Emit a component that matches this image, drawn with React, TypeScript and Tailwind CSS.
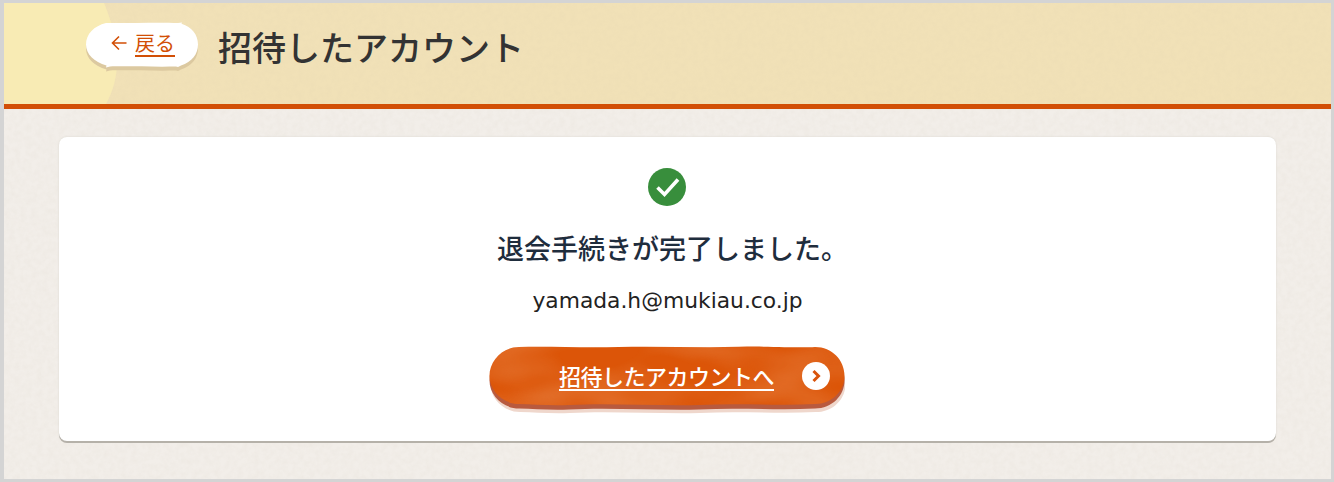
import React from 'react';

const jp = 'font-["Noto_Sans_CJK_JP","Noto_Sans",sans-serif]';

const buttonShape =
  'M30 1C60 0 90 2 130 1C170 0 210 2 250 .8C280 0 310 2 326 1C343 1 355.5 14 355.5 30C355.5 45 343 58 326 58C290 60 250 57 210 59C170 60 120 57 80 59C60 60 45 58 30 58C14 58 .5 45 .5 30C.5 14 14 1 30 1Z';
const backShape =
  'M20 1C40 1.5 70 0 92 1L96 .5L95.5 1.8C106 5 112 13 112 22.5C112 32 106 40 95 43.5L92 45L90 44.5C70 45 40 44 24 44.5L20 45.5L20.5 43.5C8 40 0 32 0 22.5C0 12 8 4 20 1Z';

function Paper({ id, opacity }: { id: string; opacity: number }) {
  return (
    <svg className="pointer-events-none absolute inset-0 h-full w-full" style={{ opacity }}>
      <filter id={id}>
        <feTurbulence type="fractalNoise" baseFrequency="0.18" numOctaves="3" seed="4" />
        <feColorMatrix values="0 0 0 0 0.55  0 0 0 0 0.48  0 0 0 0 0.38  0.9 0 0 0 -0.28" />
      </filter>
      <rect width="100%" height="100%" filter={`url(#${id})`} />
    </svg>
  );
}

function CheckBadge() {
  return (
    <svg className="mr-[1px]" width="38" height="38" viewBox="0 0 38 38">
      <circle cx="19" cy="19" r="19" fill="#388e3c" />
      <path d="M9.5 19.5l7 7L30 11.5" fill="none" stroke="#fff" strokeWidth="3.6" />
    </svg>
  );
}

function ChevronBadge() {
  return (
    <svg className="relative mt-[1px]" width="28" height="28" viewBox="0 0 28 28">
      <circle cx="14" cy="14" r="14" fill="#fff" />
      <path d="M11.5 9l5 5-5 5" fill="none" stroke="#d9540c" strokeWidth="3" />
    </svg>
  );
}

function ButtonShape() {
  return (
    <svg className="absolute left-0 top-0" width="356" height="68" viewBox="0 0 356 68">
      <defs>
        <clipPath id="btn">
          <path d={buttonShape} />
        </clipPath>
        <filter id="wash" x="0" y="0" width="100%" height="100%">
          <feTurbulence type="fractalNoise" baseFrequency="0.012 0.03" numOctaves="2" seed="11" />
          <feColorMatrix values="0 0 0 0 0.93  0 0 0 0 0.5  0 0 0 0 0.28  1.4 0 0 0 -0.5" />
        </filter>
      </defs>
      <path d={buttonShape} transform="translate(1 8)" fill="#efd7cc" />
      <path d={buttonShape} transform="translate(0 4.5)" fill="#b85a3e" />
      <path d={buttonShape} fill="#dc5508" />
      <g clipPath="url(#btn)">
        <rect width="356" height="62" filter="url(#wash)" opacity="0.35" />
      </g>
    </svg>
  );
}

function BackShape() {
  return (
    <svg className="absolute left-0 top-0" width="112" height="50" viewBox="0 0 112 50">
      <path d={backShape} transform="translate(0 4)" fill="#dcc9a0" />
      <path d={backShape} fill="#fff" />
    </svg>
  );
}

export default function App() {
  return (
    <div className={`${jp} flex h-[482px] w-full flex-col overflow-hidden border-3 border-l-4 border-[#d4d4d4] bg-[#f2eee9] text-[#2c2c2c]`}>
      <header className="relative flex h-[106px] shrink-0 items-center overflow-hidden border-b-[5px] border-[#d24f06] bg-[#f1e1b7] pb-[14px] pl-[82px]">
        <Paper id="paper-top" opacity={0.1} />
        <svg className="absolute left-0 top-0" width="114" height="101" viewBox="0 0 114 101">
          <path d="M0 0H100C109 22 113 40 113 58C113 74 109 88 102 101H0Z" fill="#f8ebb4" />
        </svg>
        <a className="relative mb-[4px] flex h-[45px] w-[112px] items-center justify-center gap-[8px] pb-[3px] pl-[2px] text-[20px] text-[#d24f06]">
          <BackShape />
          <svg className="relative" width="16" height="16" viewBox="0 0 16 16">
            <path d="M8 1.5L1.5 8 8 14.5M1.5 8H15.5" fill="none" stroke="#d24f06" strokeWidth="1.6" />
          </svg>
          <span className="relative underline decoration-[1.5px] underline-offset-4">戻る</span>
        </a>
        <h1 className="relative ml-[20px] text-[34px] leading-none font-medium text-[#333333]">招待したアカウント</h1>
      </header>
      <main className="relative flex-1 px-[55px] pt-[28px]">
        <Paper id="paper-main" opacity={0.15} />
        <section className="relative flex h-[304px] flex-col items-center rounded-[8px] bg-white pt-[31px] shadow-[0_2px_0_#b5b1a9,0_0_2px_#d8d4cc]">
          <CheckBadge />
          <h2 className="mt-[24px] ml-[10px] text-[27px] leading-[36px] font-medium text-[#1f2d3d]">退会手続きが完了しました。</h2>
          <p className="mt-[21px] font-['DejaVu_Sans'] text-[21.8px] leading-[28px] text-[#222222]">yamada.h@mukiau.co.jp</p>
          <a className="relative mt-[31px] mr-[1px] flex h-[59px] w-[356px] items-center justify-between pl-[70px] pr-[15px] text-white">
            <ButtonShape />
            <span className="relative text-[22px] font-medium tracking-[-0.5px] underline decoration-2 underline-offset-4">招待したアカウントへ</span>
            <ChevronBadge />
          </a>
        </section>
      </main>
    </div>
  );
}
